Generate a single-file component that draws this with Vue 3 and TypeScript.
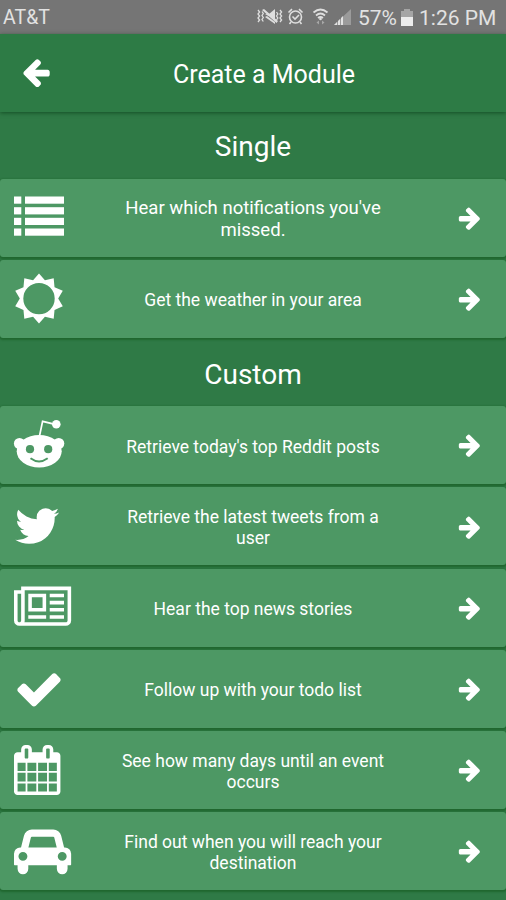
<script setup lang="ts">
interface Module {
  icon: string
  lines: string[]
  large?: boolean
}

interface Section {
  title: string
  modules: Module[]
}

const sections: Section[] = [
  {
    title: 'Single',
    modules: [
      { icon: 'list', lines: ["Hear which notifications you've", 'missed.'], large: true },
      { icon: 'sun', lines: ['Get the weather in your area'] },
    ],
  },
  {
    title: 'Custom',
    modules: [
      { icon: 'reddit', lines: ["Retrieve today's top Reddit posts"] },
      { icon: 'twitter', lines: ['Retrieve the latest tweets from a', 'user'] },
      { icon: 'news', lines: ['Hear the top news stories'] },
      { icon: 'check', lines: ['Follow up with your todo list'] },
      { icon: 'calendar', lines: ['See how many days until an event', 'occurs'] },
      { icon: 'car', lines: ['Find out when you will reach your', 'destination'] },
    ],
  },
]

const glyphs: Record<string, string> = {
  twitter:
    'M1620 408q-67 98-162 167 1 14 1 42 0 130-38 259.5t-115.5 248.5-184.5 210.5-258 146-323 54.5q-271 0-496-145 35 4 78 4 225 0 401-138-105-2-188-64.5t-114-159.5q33 5 61 5 43 0 85-11-112-23-185.5-111.5t-73.5-205.5v-4q68 38 146 41-66-44-105-115t-39-154q0-88 44-163 121 149 294.5 238.5t371.5 99.5q-8-38-8-74 0-134 94.5-228.5t228.5-94.5q140 0 236 102 109-21 205-78-37 115-142 178 93-10 186-50z',
  news:
    'M1024 512h-384v384h384v-384zm128 640v128h-640v-128h640zm0-768v640h-640v-640h640zm640 768v128h-512v-128h512zm0-256v128h-512v-128h512zm0-256v128h-512v-128h512zm0-256v128h-512v-128h512zm-1536 960v-960h-128v960q0 26 19 45t45 19 45-19 19-45zm1664 0v-1088h-1536v1088q0 33-11 64h1483q26 0 45-19t19-45zm128-1216v1216q0 80-56 136t-136 56h-1664q-80 0-136-56t-56-136v-1088h256v-128h1792z',
  check:
    'M1671 566q0 40-28 68l-724 724-136 136q-28 28-68 28t-68-28l-136-136-362-362q-28-28-28-68t28-68l136-136q28-28 68-28t68 28l294 295 656-657q28-28 68-28t68 28l136 136q28 28 28 68z',
  calendar:
    'M128 1664h288v-288h-288v288zm352 0h320v-288h-320v288zm-352-352h288v-320h-288v320zm352 0h320v-320h-320v320zm-352-384h288v-288h-288v288zm736 736h320v-288h-320v288zm-384-736h320v-288h-320v288zm768 736h288v-288h-288v288zm-384-352h320v-320h-320v320zm-352-864v-288q0-13-9.5-22.5t-22.5-9.5h-64q-13 0-22.5 9.5t-9.5 22.5v288q0 13 9.5 22.5t22.5 9.5h64q13 0 22.5-9.5t9.5-22.5zm736 864h288v-320h-288v320zm-384-384h320v-288h-320v288zm384 0h288v-288h-288v288zm32-480v-288q0-13-9.5-22.5t-22.5-9.5h-64q-13 0-22.5 9.5t-9.5 22.5v288q0 13 9.5 22.5t22.5 9.5h64q13 0 22.5-9.5t9.5-22.5zm384-64v1280q0 52-38 90t-90 38h-1408q-52 0-90-38t-38-90v-1280q0-52 38-90t90-38h128v-96q0-66 47-113t113-47h64q66 0 113 47t47 113v96h384v-96q0-66 47-113t113-47h64q66 0 113 47t47 113v96h128q52 0 90 38t38 90z',
  car:
    'M480 1088q0-66-47-113t-113-47-113 47-47 113 47 113 113 47 113-47 47-113zm36-320h1016l-89-357q-2-8-14-17.5t-21-9.5h-768q-9 0-21 9.5t-14 17.5zm1372 320q0-66-47-113t-113-47-113 47-47 113 47 113 113 47 113-47 47-113zm160-96v384q0 14-9 23t-23 9h-96v128q0 80-56 136t-136 56-136-56-56-136v-128h-1024v128q0 80-56 136t-136 56-136-56-56-136v-128h-96q-14 0-23-9t-9-23v-384q0-93 65.5-158.5t158.5-65.5h28l105-419q23-94 104-157.5t179-63.5h768q98 0 179 63.5t104 157.5l105 419h28q93 0 158.5 65.5t65.5 158.5z',
}

const arrow =
  'M1600 960q0 54-37 91l-651 651q-39 37-91 37-51 0-90-37l-75-75q-38-38-38-91t38-91l293-293h-704q-52 0-84.5-37.5t-32.5-90.5v-128q0-53 32.5-90.5t84.5-37.5h704l-293-294q-38-36-38-90t38-90l75-75q38-38 90-38 53 0 91 38l651 651q37 35 37 90z'

// Ten-pointed star ring around a round opening
const sunPoints = Array.from({ length: 20 }, (_, i) => {
  const r = i % 2 === 0 ? 25 : 19.2
  const a = (i * Math.PI) / 10
  return `${(39 + r * Math.sin(a)).toFixed(2)} ${(38.6 - r * Math.cos(a)).toFixed(2)}`
}).join('L')
const sun = `M${sunPoints}ZM54.7 38.6A15.7 15.7 0 1 0 23.3 38.6A15.7 15.7 0 1 0 54.7 38.6Z`
</script>

<template>
  <div class="screen">
    <div class="status">
      <span class="carrier">AT&amp;T</span>
      <svg class="indicators" viewBox="256 0 98 34">
        <g fill="none" stroke="#dedede" stroke-width="1.3">
          <path d="M258 10l1.6 2-1.6 2 1.6 2-1.6 2 1.6 2-1.6 2M262 11.5l1.3 2-1.3 2 1.3 2-1.3 2 1.3 2M280 10l1.6 2-1.6 2 1.6 2-1.6 2 1.6 2-1.6 2M276.5 12l1.3 2-1.3 2 1.3 2-1.3 2" />
          <circle cx="295.500" cy="17" r="6" stroke-width="1.6" />
          <path d="M292.5 16.5l2.500 2.500 4-4M288.500 12.500l3.500-3.300M302.500 12.500l-3.500-3.300M291 22l-1.500 2M300 22l1.500 2" stroke-width="1.6" />
          <path d="M313.500 12.500Q320.500 6.500 327.500 12.500M316 15.500Q320.500 11.500 325 15.500M318 18Q320.500 16 323 18" stroke-width="1.7" />
        </g>
        <path d="M265 14l4 0 6-5v11zM262 10l2-1 14 12-1.500 2zM265 17l10 7v-2l-8-6z" fill="#dedede" />
        <circle cx="320.500" cy="19" r="1.300" fill="#dedede" />
        <path d="M316.500 22.500l2.500-2v4zM324.500 22.500l-2.500-2v4z" fill="#a8a8a8" />
        <path d="M351 9v16h-17z" fill="#9b9b9b" />
        <path d="M334 25l3-3v3zM338 21l2-2v6h-2zM341 18l2-2v9h-2z" fill="#e2e2e2" />
      </svg>
      <span class="percent">57%</span>
      <svg class="battery" viewBox="0 0 12 17">
        <path d="M0 2h3V0h6v2h3v6H0z" fill="#a5a5a5" />
        <path d="M0 8h12v9H0z" fill="#ececec" />
      </svg>
      <span class="clock">1:26 PM</span>
    </div>

    <header class="header">
      <svg class="back" viewBox="0 0 1792 1792"><path :d="arrow" transform="matrix(-1 0 0 1 1792 0)" /></svg>
      <h1>Create a Module</h1>
    </header>

    <section v-for="section in sections" :key="section.title" class="section">
      <h2>{{ section.title }}</h2>
      <div class="cards">
        <div v-for="m in section.modules" :key="m.icon" class="card">
          <svg class="icon" viewBox="0 0 78 78">
            <g v-if="m.icon === 'list'">
              <template v-for="y in [17.5, 28.2, 38.8, 49.5]" :key="y">
                <rect x="14" :y="y" width="7.3" height="7.2" />
                <rect x="25" :y="y" width="39" height="7.2" />
              </template>
            </g>
            <path v-else-if="m.icon === 'sun'" :d="sun" fill-rule="evenodd" />
            <g v-else-if="m.icon === 'reddit'">
              <path d="M39.5 30L42.6 15.3L53 17.8" fill="none" stroke="#fff" stroke-width="1.7" />
              <circle cx="56.3" cy="18.2" r="4.3" />
              <circle cx="19.5" cy="37.5" r="5.6" />
              <circle cx="58.7" cy="37.5" r="5.6" />
              <ellipse cx="39.2" cy="45.3" rx="22.5" ry="16.2" />
              <circle cx="30" cy="43.2" r="4.1" class="hole" />
              <circle cx="48.2" cy="43.2" r="4.1" class="hole" />
              <path d="M30.5 52.3Q39 58.6 47.7 52.3" class="smile" />
            </g>
            <path
              v-else
              :d="glyphs[m.icon]"
              fill-rule="evenodd"
              transform="translate(14 14) scale(0.0279)"
            />
          </svg>
          <p :class="{ large: m.large }">
            <span v-for="line in m.lines" :key="line">{{ line }}</span>
          </p>
          <svg class="go" viewBox="0 0 1792 1792"><path :d="arrow" /></svg>
        </div>
      </div>
    </section>
  </div>
</template>

<style>
body {
  margin: 0;
  overflow: hidden;
}
</style>

<style scoped>
.screen {
  width: 506px;
  height: 900px;
  overflow: hidden;
  background: #2f7a46;
  color: #fff;
  font-family: Roboto, sans-serif;
}
.status {
  display: flex;
  align-items: center;
  box-sizing: border-box;
  height: 34px;
  padding-left: 3px;
  background: #757575;
  color: #e2e2e2;
  font-size: 21px;
  line-height: 32px;
  white-space: nowrap;
}
.status span {
  padding-top: 2px;
}
.carrier {
  font-size: 19.5px;
}
.indicators {
  width: 98px;
  height: 34px;
  margin-left: auto;
}
.percent {
  width: 43px;
  margin-left: 4px;
  letter-spacing: -0.1px;
}
.battery {
  width: 12px;
  height: 17px;
  margin-right: 6px;
}
.clock {
  width: 87px;
}
.header {
  display: grid;
  grid-template-columns: 72px 1fr 50px;
  align-items: center;
  height: 78px;
  background: #2d7b45;
  box-shadow: 0 1px 4px rgba(0, 50, 15, 0.6);
}
.back {
  width: 32px;
  height: 32px;
  margin: -2px 0 0 20px;
  fill: #fff;
}
h1 {
  margin: 4px 0 0;
  font-size: 25px;
  font-weight: 400;
  line-height: 30px;
  text-align: center;
}
h2 {
  height: 66.5px;
  margin: 0;
  padding-top: 2px;
  box-sizing: border-box;
  font-size: 28px;
  font-weight: 400;
  line-height: 66px;
  text-align: center;
}
.section + .section h2 {
  height: 68.6px;
  padding-top: 4px;
}
.cards {
  display: flex;
  flex-direction: column;
  gap: 3.2px;
}
.card {
  display: grid;
  grid-template-columns: 78px 1fr 78px;
  align-items: center;
  height: 78px;
  border-radius: 3px;
  background: #4d9864;
  box-shadow: 0 1px 2px 1px #20672f;
}
.icon {
  width: 78px;
  height: 78px;
  fill: #fff;
}
.hole {
  fill: #4d9864;
}
.smile {
  fill: none;
  stroke: #4d9864;
  stroke-width: 2;
}
p {
  margin: 3px 0 0;
  font-size: 17.5px;
  line-height: 20.5px;
  text-align: center;
}
p.large {
  margin-top: 2px;
  font-size: 18.55px;
  line-height: 22px;
}
p span {
  display: block;
}
.go {
  width: 25.6px;
  height: 25.6px;
  margin: 0 0 0 29px;
  fill: #fff;
}
</style>
